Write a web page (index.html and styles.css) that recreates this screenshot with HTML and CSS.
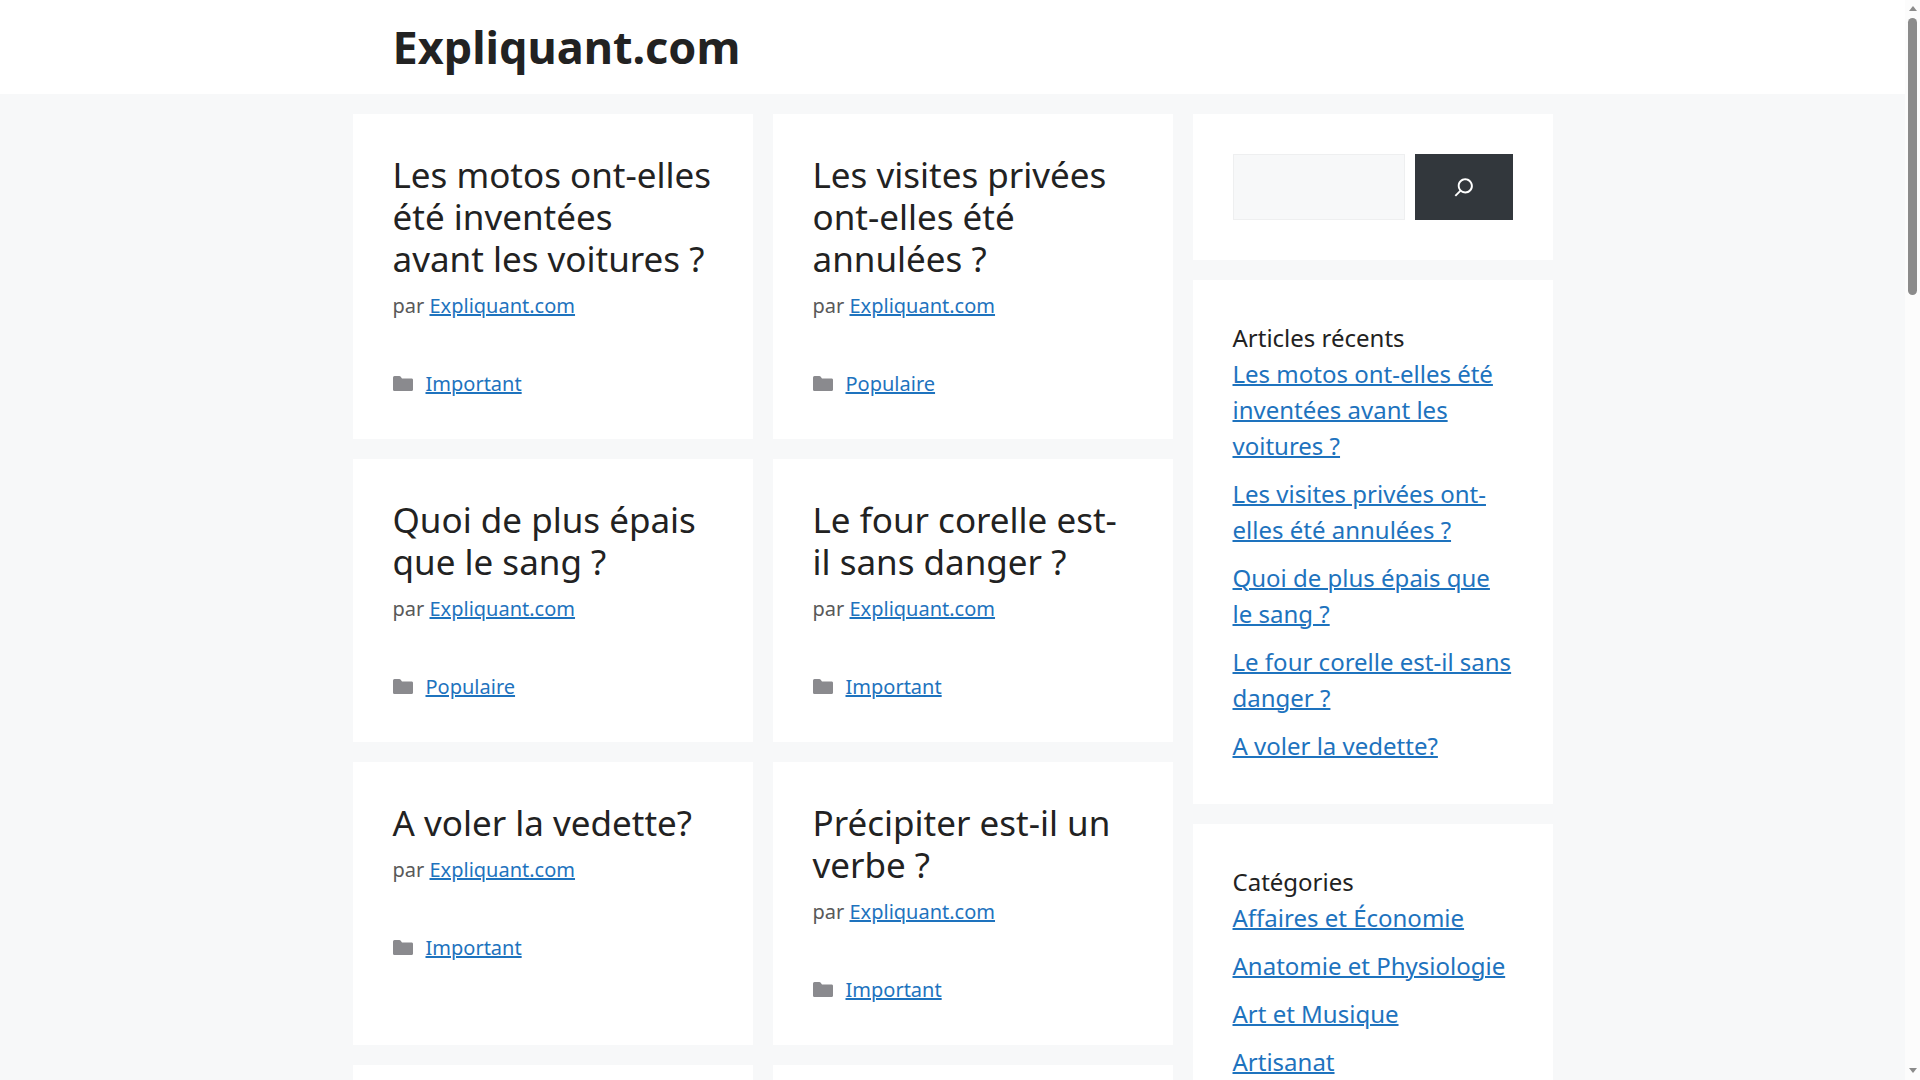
FILE: index.html
```html
<!DOCTYPE html>
<html lang="fr">

<head>
    <meta charset="UTF-8">
    <meta name="viewport" content="width=device-width, initial-scale=1.0">
    <title>Expliquant.com</title>
    <link rel="stylesheet" href="styles.css">
</head>

<body>
    <svg class="sprite" aria-hidden="true">
        <symbol id="folder" viewBox="0 0 512 384">
            <path d="M0 48C0 21 14 0 40 0h120c18 0 28 8 38 20l32 44h242c26 0 40 14 40 38v244c0 24-14 38-38 38H38c-24 0-38-14-38-38z" />
        </symbol>
    </svg>

    <header class="site-header">
        <div class="container">
            <p class="site-title"><a href="#">Expliquant.com</a></p>
        </div>
    </header>

    <div class="container site-content">
        <main class="posts">
            <article class="post">
                <h2><a href="#">Les motos ont-elles été inventées avant les voitures ?</a></h2>
                <p class="meta">par <a href="#">Expliquant.com</a></p>
                <footer class="cat"><svg class="icon"><use href="#folder" /></svg><a href="#">Important</a></footer>
            </article>
            <article class="post">
                <h2><a href="#">Les visites privées ont-elles été annulées ?</a></h2>
                <p class="meta">par <a href="#">Expliquant.com</a></p>
                <footer class="cat"><svg class="icon"><use href="#folder" /></svg><a href="#">Populaire</a></footer>
            </article>
            <article class="post">
                <h2><a href="#">Quoi de plus épais que le sang ?</a></h2>
                <p class="meta">par <a href="#">Expliquant.com</a></p>
                <footer class="cat"><svg class="icon"><use href="#folder" /></svg><a href="#">Populaire</a></footer>
            </article>
            <article class="post">
                <h2><a href="#">Le four corelle est-il sans danger ?</a></h2>
                <p class="meta">par <a href="#">Expliquant.com</a></p>
                <footer class="cat"><svg class="icon"><use href="#folder" /></svg><a href="#">Important</a></footer>
            </article>
            <article class="post">
                <h2><a href="#">A voler la vedette?</a></h2>
                <p class="meta">par <a href="#">Expliquant.com</a></p>
                <footer class="cat"><svg class="icon"><use href="#folder" /></svg><a href="#">Important</a></footer>
            </article>
            <article class="post">
                <h2><a href="#">Précipiter est-il un verbe ?</a></h2>
                <p class="meta">par <a href="#">Expliquant.com</a></p>
                <footer class="cat"><svg class="icon"><use href="#folder" /></svg><a href="#">Important</a></footer>
            </article>
            <article class="post"></article>
            <article class="post"></article>
        </main>

        <aside class="sidebar">
            <section class="widget">
                <form class="search" role="search">
                    <input type="search" name="s" aria-label="Rechercher">
                    <button type="submit" aria-label="Rechercher">
                        <svg viewBox="0 0 24 24" width="30" height="30">
                            <path d="M13 5c-3.3 0-6 2.7-6 6 0 1.4.5 2.7 1.3 3.7l-3.8 3.8 1.1 1.1 3.8-3.8c1 .8 2.3 1.3 3.7 1.3 3.3 0 6-2.7 6-6S16.3 5 13 5zm0 10.5c-2.5 0-4.5-2-4.5-4.5s2-4.5 4.5-4.5 4.5 2 4.5 4.5-2 4.5-4.5 4.5z" />
                        </svg>
                    </button>
                </form>
            </section>
            <section class="widget">
                <h2>Articles récents</h2>
                <ul>
                    <li><a href="#">Les motos ont-elles été inventées avant les voitures ?</a></li>
                    <li><a href="#">Les visites privées ont-elles été annulées ?</a></li>
                    <li><a href="#">Quoi de plus épais que le sang ?</a></li>
                    <li><a href="#">Le four corelle est-il sans danger ?</a></li>
                    <li><a href="#">A voler la vedette?</a></li>
                </ul>
            </section>
            <section class="widget">
                <h2>Catégories</h2>
                <ul>
                    <li><a href="#">Affaires et Économie</a></li>
                    <li><a href="#">Anatomie et Physiologie</a></li>
                    <li><a href="#">Art et Musique</a></li>
                    <li><a href="#">Artisanat</a></li>
                </ul>
            </section>
        </aside>
    </div>

    <!-- scrollbar -->
    <div class="scrollbar" aria-hidden="true">
        <span class="arrow up"></span>
        <span class="thumb"></span>
        <span class="arrow down"></span>
    </div>
</body>

</html>
```
FILE: styles.css
```css
* {
    margin: 0;
    padding: 0;
    box-sizing: border-box;
}

body {
    height: 100vh;
    overflow: hidden;
    padding-right: 15px;
    background-color: #f7f8f9;
    color: #222222;
    font-family: "Noto Sans", sans-serif;
    font-size: 24px;
    line-height: 36px;
}

a {
    color: #1e73be;
    text-decoration-thickness: 2px;
}

.sprite {
    display: none;
}

.container {
    max-width: 1200px;
    margin: 0 auto;
}

/* header */
.site-header {
    background-color: #ffffff;
}

.site-header .container {
    padding: 20px 40px;
}

.site-title {
    font-size: 45px;
    font-weight: bold;
    line-height: 54px;
}

.site-title a,
.post h2 a {
    color: #222222;
    text-decoration: none;
}

/* content */
.site-content {
    display: grid;
    grid-template-columns: minmax(0, 1fr) 360px;
    gap: 20px;
    padding-top: 20px;
}

.posts {
    display: grid;
    grid-template-columns: repeat(2, minmax(0, 1fr));
    gap: 20px;
    align-content: start;
}

.post {
    padding: 40px;
    background-color: #ffffff;
}

.post h2 {
    font-size: 35px;
    font-weight: normal;
    line-height: 42px;
}

.meta,
.cat {
    font-size: 20px;
    line-height: 31px;
    color: #595959;
}

.meta {
    margin-top: 10px;
}

.cat {
    display: flex;
    align-items: center;
    gap: 13px;
    margin-top: 47px;
}

.icon {
    width: 20px;
    height: 15px;
    fill: #8a8a8e;
}

/* sidebar */
.widget {
    padding: 40px;
    margin-bottom: 20px;
    background-color: #ffffff;
}

.widget h2 {
    font-size: 24px;
    font-weight: normal;
}

.widget ul {
    list-style: none;
}

.widget li {
    margin-bottom: 12px;
}

.widget li:last-child {
    margin-bottom: 0;
}

.search {
    display: flex;
    gap: 10px;
}

.search input {
    flex: 1;
    min-width: 0;
    height: 66px;
    padding: 10px 16px;
    border: 1px solid #eeeff0;
    background-color: #f7f8f9;
    font: inherit;
}

.search button {
    display: flex;
    align-items: center;
    justify-content: center;
    width: 98px;
    border: none;
    background-color: #32373c;
    fill: #ffffff;
}

/* scrollbar */
.scrollbar {
    position: fixed;
    top: 0;
    right: 0;
    bottom: 0;
    display: flex;
    flex-direction: column;
    align-items: center;
    width: 15px;
    padding: 6px 0 7px;
    background-color: #fcfcfc;
}

.arrow {
    border: 4px solid transparent;
    border-top: none;
    border-bottom: 5px solid #8b8b8b;
}

.arrow.down {
    border-top: 5px solid #8b8b8b;
    border-bottom: none;
    margin-top: auto;
}

.thumb {
    width: 9px;
    height: 26%;
    margin-top: 7px;
    border-radius: 5px;
    background-color: #8b8b8b;
}
```
